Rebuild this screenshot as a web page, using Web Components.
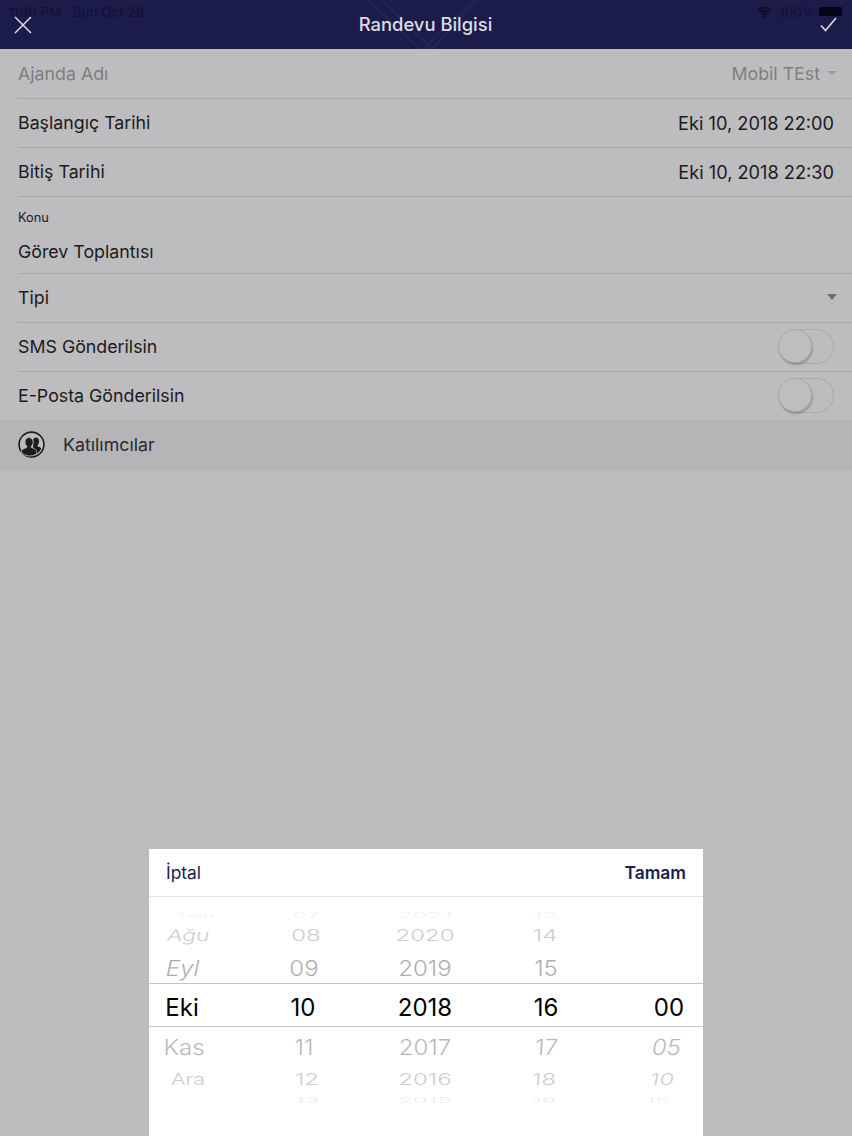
<!DOCTYPE html>
<html lang="tr">
<head>
<meta charset="utf-8">
<title>Randevu Bilgisi</title>
<style>
  html, body { margin: 0; padding: 0; height: 100%; }
  body { background: #bdbcbf; font-family: Inter, "Liberation Sans", sans-serif; overflow: hidden; }
</style>
</head>
<body>
<appt-screen>
  <status-strip></status-strip>
  <nav-head title="Randevu Bilgisi"></nav-head>
  <form-row label="Ajanda Adı" value="Mobil TEst" muted caret></form-row>
  <form-row label="Başlangıç Tarihi" value="Eki 10, 2018 22:00"></form-row>
  <form-row label="Bitiş Tarihi" value="Eki 10, 2018 22:30"></form-row>
  <text-row label="Konu" value="Görev Toplantısı"></text-row>
  <form-row label="Tipi" caret></form-row>
  <form-row label="SMS Gönderilsin"><off-toggle slot="end"></off-toggle></form-row>
  <form-row label="E-Posta Gönderilsin" last><off-toggle slot="end"></off-toggle></form-row>
  <people-row label="Katılımcılar"></people-row>
  <date-sheet></date-sheet>
</appt-screen>

<script>
class ApptScreen extends HTMLElement {
  constructor() {
    super();
    this.attachShadow({ mode: "open" });
    this.shadowRoot.innerHTML = `
      <style>
        :host { display: flex; flex-direction: column; position: relative; width: 852px; height: 1136px; overflow: hidden; color: #1b1b1d; }
      </style>
      <slot></slot>
    `;
  }
}

class StatusStrip extends HTMLElement {
  constructor() {
    super();
    this.attachShadow({ mode: "open" });
    this.shadowRoot.innerHTML = `
      <style>
        :host { position: absolute; left: 0; top: 0; width: 852px; height: 23px; z-index: 2; display: flex; justify-content: space-between; align-items: center; padding: 0 10px 0 8px; box-sizing: border-box; font: 13.5px Inter, "Liberation Sans", sans-serif; color: #0f0f33; }
        .right { display: flex; align-items: center; gap: 7px; }
        .batt { width: 23px; height: 9px; background: #05051a; border-radius: 1px; margin-left: -3px; }
        svg { display: block; }
      </style>
      <span>11:16 PM&nbsp;&nbsp;&nbsp;Sun Oct 28</span>
      <span class="right">
        <svg width="15" height="12" viewBox="0 0 16 12"><path d="M1 4.2a10 10 0 0 1 14 0M3.4 6.6a6.6 6.6 0 0 1 9.2 0M5.7 8.8a3.3 3.3 0 0 1 4.6 0" fill="none" stroke="#0a0a28" stroke-width="1.7"/><circle cx="8" cy="10.6" r="1.3" fill="#0a0a28"/></svg>
        <span>100%</span>
        <span class="batt"></span>
      </span>
    `;
  }
}

class NavHead extends HTMLElement {
  constructor() {
    super();
    this.attachShadow({ mode: "open" });
    this.shadowRoot.innerHTML = `
      <style>
        :host { display: grid; grid-template-columns: 1fr auto 1fr; align-items: center; height: 49px; flex: none; margin-bottom: .8px; padding: 0 15px 0 14px; box-sizing: border-box; background: #1c1c4b; color: #dcdce2; position: relative; overflow: hidden; }
        .title { font-size: 18.4px; font-weight: 500; position: relative; padding-bottom: 2px; }
        .bg { position: absolute; left: 0; top: 0; }
        svg.icon { display: block; position: relative; }
        .end { justify-self: end; }
      </style>
      <svg class="bg" width="852" height="49" viewBox="0 0 852 49"><path d="M368 0l52 49M382 0l50 49M478 0l-46 49M474 0l-50 49" fill="none" stroke="#232356" stroke-width="2"/></svg>
      <svg class="icon" width="18" height="18" viewBox="0 0 18 18"><path d="M1 1l16 16M17 1L1 17" fill="none" stroke="#dcdce2" stroke-width="1.5"/></svg>
      <span class="title"></span>
      <svg class="icon end" width="17" height="15" viewBox="0 0 17 15"><path d="M1 8.5l4.5 5L16 1" fill="none" stroke="#dcdce2" stroke-width="1.6"/></svg>
    `;
    this.shadowRoot.querySelector(".title").textContent = this.getAttribute("title");
    this.removeAttribute("title");
  }
}

class FormRow extends HTMLElement {
  constructor() {
    super();
    this.attachShadow({ mode: "open" });
    const muted = this.hasAttribute("muted");
    const caret = this.hasAttribute("caret");
    const last = this.hasAttribute("last");
    this.shadowRoot.innerHTML = `
      <style>
        :host { display: block; flex: none; padding-left: 18px; }
        .in { display: flex; justify-content: space-between; align-items: center; box-sizing: border-box; height: ${last ? "47.7px" : "48.2px"}; padding: 0 18px 1px 0; border-bottom: 0; color: ${muted ? "#7f7e81" : "#1b1b1d"}; font-size: 17.8px; }
        .line { height: 1px; background: ${last ? "transparent" : "#a8a7aa"}; display: ${last ? "none" : "block"}; }
        .end { display: flex; align-items: center; gap: 7px; }
        .value { font-size: 18.2px; }
        .caret { width: 0; height: 0; border-left: 5px solid transparent; border-right: 5px solid transparent; border-top: ${muted ? "4px solid #9a999c" : "6px solid #6c6b6e"}; margin-right: -3px; }
      </style>
      <div class="in">
        <span class="label"></span>
        <span class="end"><span class="value"></span><slot name="end"></slot>${caret ? '<span class="caret"></span>' : ""}</span>
      </div>
      <div class="line"></div>
    `;
    this.shadowRoot.querySelector(".label").textContent = this.getAttribute("label");
    this.shadowRoot.querySelector(".value").textContent = this.getAttribute("value") || "";
    if (!this.getAttribute("value")) this.shadowRoot.querySelector(".end").style.gap = "0";
    if (muted) this.shadowRoot.querySelector(".value").style.fontSize = "17.8px";
  }
}

class TextRow extends HTMLElement {
  constructor() {
    super();
    this.attachShadow({ mode: "open" });
    this.shadowRoot.innerHTML = `
      <style>
        :host { display: block; flex: none; padding-left: 18px; }
        .in { height: 75.5px; border-bottom: 1px solid #a8a7aa; display: flex; flex-direction: column; }
        .label { font-size: 12.8px; line-height: 16px; margin-top: 13px; }
        .value { font-size: 17.8px; line-height: 22px; margin-top: 15px; }
      </style>
      <div class="in">
        <span class="label"></span>
        <span class="value"></span>
      </div>
    `;
    this.shadowRoot.querySelector(".label").textContent = this.getAttribute("label");
    this.shadowRoot.querySelector(".value").textContent = this.getAttribute("value");
  }
}

class OffToggle extends HTMLElement {
  constructor() {
    super();
    this.attachShadow({ mode: "open" });
    this.shadowRoot.innerHTML = `
      <style>
        :host { display: block; width: 56px; height: 35px; box-sizing: border-box; border: 1.5px solid #a9a8ab; border-radius: 18px; position: relative; }
        .knob { position: absolute; left: -1px; top: -1px; width: 34px; height: 34px; box-sizing: border-box; border-radius: 50%; background: #bebdc0; border: 1px solid #acabae; box-shadow: 1px 2px 2px rgba(0,0,0,.2); }
      </style>
      <div class="knob"></div>
    `;
  }
}

class PeopleRow extends HTMLElement {
  constructor() {
    super();
    this.attachShadow({ mode: "open" });
    this.shadowRoot.innerHTML = `
      <style>
        :host { display: flex; flex: none; align-items: center; gap: 18px; height: 50px; padding-left: 18px; background: #b5b4b7; font-size: 17.8px; color: #2b2b2d; }
        svg { display: block; }
      </style>
      <svg width="27" height="27" viewBox="0 0 27 27">
        <circle cx="13.5" cy="13.5" r="12.4" fill="#bdbcbf" stroke="#1c1c1e" stroke-width="1.6"/>
        <path d="M17.5 6.5c2.2 0 3.6 1.7 3.6 3.9 0 1.5-.6 2.8-1.6 3.6v1.2c2 .7 3.4 1.5 3.9 2.3a11.4 11.4 0 0 1-4.2 5l-4-.2V8z" fill="#1c1c1e"/>
        <path d="M10.8 6.5c2.6 0 4.3 2 4.3 4.6 0 1.7-.7 3.1-1.8 4v1.4c2.4.8 4.3 1.7 5 2.8.3.5.4 2 .4 3.6a11.6 11.6 0 0 1-15.4-1.6c.1-1 .3-1.7.5-2 .7-1.1 2.6-2 5-2.8V15c-1.1-.9-1.8-2.3-1.8-4 0-2.5 1.6-4.5 3.8-4.5z" fill="#1c1c1e" stroke="#bdbcbf" stroke-width=".8"/>
      </svg>
      <span></span>
    `;
    this.shadowRoot.querySelector("span").textContent = this.getAttribute("label");
  }
}

// row look, top to bottom of the wheel: [scaleY, opacity]
const WHEEL_LOOK = [[0.3, 0.05], [0.68, 0.2], [0.92, 0.32], [1, 1], [0.92, 0.28], [0.68, 0.2], [0.3, 0.08]];
const WHEEL_ROWS = "20px 20px 46px 32px 48px 16px 26px";

class WheelColumn extends HTMLElement {
  constructor() {
    super();
    this.attachShadow({ mode: "open" });
    const items = this.getAttribute("items").split(",");
    const nudge = (this.getAttribute("nudge") || "0,0,0,0,0,0,0").split(",");
    const widen = (this.getAttribute("widen") || "1,1,1,1,1,1,1").split(",");
    const tiltTop = this.getAttribute("tilt-top") || 0;
    const tiltBottom = this.getAttribute("tilt-bottom") || 0;
    const cells = items.map((text, i) => {
      const [sy, op] = WHEEL_LOOK[i];
      const tilt = i < 3 ? tiltTop : i > 3 ? tiltBottom : 0;
      const weight = i === 3 ? 400 : 300;
      return `<div class="cell"><span style="opacity:${op};font-weight:${weight};transform:translateX(${nudge[i]}px) skewX(${tilt}deg) scale(${widen[i]},${sy})">${text}</span></div>`;
    }).join("");
    this.shadowRoot.innerHTML = `
      <style>
        :host { display: grid; grid-template-rows: ${WHEEL_ROWS}; font-size: 24px; color: #000; white-space: nowrap; }
        .cell { display: flex; justify-content: center; align-items: center; min-height: 0; }
        span { display: inline-block; line-height: 1; }
      </style>
      ${cells}
    `;
  }
}

class DateSheet extends HTMLElement {
  constructor() {
    super();
    this.attachShadow({ mode: "open" });
    this.shadowRoot.innerHTML = `
      <style>
        :host { position: absolute; left: 149px; top: 849px; width: 554px; height: 287px; background: #fff; display: flex; flex-direction: column; z-index: 3; }
        header { display: flex; justify-content: space-between; align-items: center; height: 47px; flex: none; padding: 0 17px; border-bottom: 1px solid #e2e2e4; color: #1d1d4e; font-size: 17.4px; }
        b { font-weight: 600; }
        .wheels { position: relative; flex: 1; display: grid; grid-template-columns: 70px 170px 72px 170px 72px; padding-top: 9px; align-content: start; }
        .band { position: absolute; left: 0; right: 0; top: 86px; height: 42px; border-top: 1px solid #c4c4c7; border-bottom: 1px solid #c4c4c7; pointer-events: none; }
      </style>
      <header><span>İptal</span><b>Tamam</b></header>
      <div class="wheels">
        <wheel-column items="Tem,Ağu,Eyl,Eki,Kas,Ara,&nbsp;" tilt-top="-12" nudge="11,4,-1,-2,0,4,0" widen="0.8,0.95,1,1,1,0.9,1"></wheel-column>
        <wheel-column items="07,08,09,10,11,12,13" nudge="2,2,0,-1,0,3,3"></wheel-column>
        <wheel-column items="2021,2020,2019,2018,2017,2016,2015"></wheel-column>
        <wheel-column items="13,14,15,16,17,18,19" tilt-bottom="-4" nudge="-1,-1,0,0,0,-2,-2"></wheel-column>
        <wheel-column items="&nbsp;,&nbsp;,&nbsp;,00,05,10,15" tilt-bottom="-10" nudge="0,0,0,2,0,-5,-9"></wheel-column>
        <div class="band"></div>
      </div>
    `;
  }
}

customElements.define("appt-screen", ApptScreen);
customElements.define("status-strip", StatusStrip);
customElements.define("nav-head", NavHead);
customElements.define("form-row", FormRow);
customElements.define("text-row", TextRow);
customElements.define("off-toggle", OffToggle);
customElements.define("people-row", PeopleRow);
customElements.define("wheel-column", WheelColumn);
customElements.define("date-sheet", DateSheet);
</script>
</body>
</html>
